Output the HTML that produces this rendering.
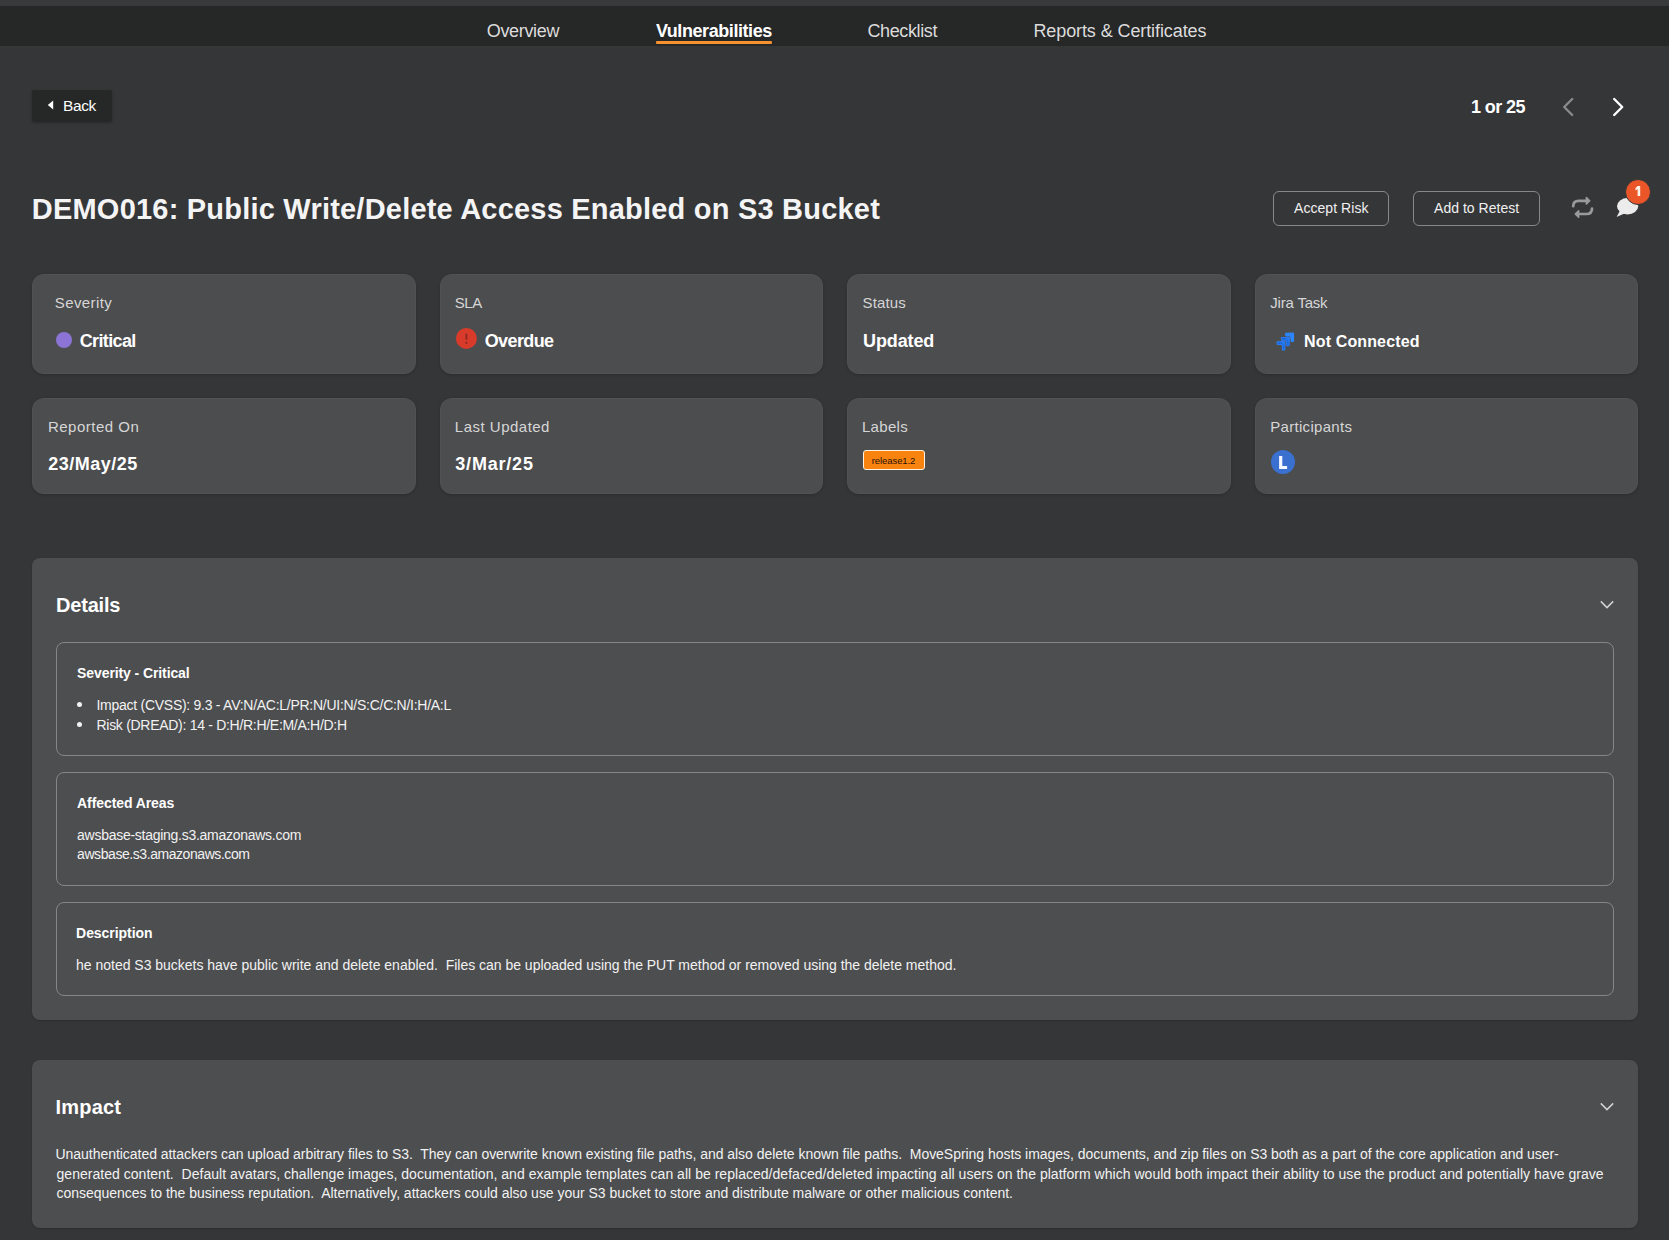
<!DOCTYPE html>
<html><head><meta charset="utf-8"><style>
html,body{margin:0;padding:0;}
body{width:1669px;height:1240px;overflow:hidden;background:#353638;position:relative;font-family:"Liberation Sans",sans-serif;}
.t{position:absolute;white-space:nowrap;line-height:1;font-family:"Liberation Sans",sans-serif;}
.abs{position:absolute;}
#stripe{left:0;top:0;width:1669px;height:6px;background:#393a3c;}
#nav{left:0;top:6px;width:1669px;height:40px;background:#262727;}
#uline{left:656px;top:41px;width:116px;height:3px;background:#f5922f;border-radius:1px;}
#backbtn{left:32px;top:90px;width:80px;height:32px;background:#262727;border-radius:2px;box-shadow:0 1px 3px rgba(0,0,0,0.25);}
.card{position:absolute;background:#4c4d4f;border-radius:12px;box-shadow:inset 0 0 0 1px rgba(255,255,255,0.03),0 1px 3px rgba(0,0,0,0.18);}
.panel{position:absolute;background:#4d4e50;border-radius:8px;box-shadow:0 1px 2px rgba(0,0,0,0.2);}
.box{position:absolute;border:1.5px solid #868686;border-radius:8px;box-sizing:border-box;}
.obtn{position:absolute;border:1.5px solid #888;border-radius:6px;box-sizing:border-box;}

</style></head><body>
<div id="stripe" class="abs"></div>
<div id="nav" class="abs"></div>
<div id="uline" class="abs"></div>
<div id="backbtn" class="abs"></div>
<svg class="abs" style="left:46px;top:99px" width="9" height="12" viewBox="0 0 9 12"><path d="M7.2 1.4 L1.8 6 L7.2 10.4 Z" fill="#fff"/></svg>
<!-- pagination chevrons -->
<svg class="abs" style="left:1560px;top:95px" width="16" height="24" viewBox="0 0 16 24"><path d="M12.2 4 L4.2 12 L12.2 20" fill="none" stroke="#8a8a8a" stroke-width="2.4" stroke-linecap="round" stroke-linejoin="round"/></svg>
<svg class="abs" style="left:1610px;top:95px" width="16" height="24" viewBox="0 0 16 24"><path d="M4.2 4 L12.2 12 L4.2 20" fill="none" stroke="#ffffff" stroke-width="2.4" stroke-linecap="round" stroke-linejoin="round"/></svg>
<!-- outline buttons -->
<div class="obtn" style="left:1273px;top:191px;width:116px;height:35px"></div>
<div class="obtn" style="left:1413px;top:191px;width:127px;height:35px"></div>
<!-- retest icon -->
<svg class="abs" style="left:1568px;top:193px" width="30" height="28" viewBox="0 0 30 28">
<path d="M5.2 13.2 C5.2 10 7 7.9 10.5 7.9 L18.5 7.9" fill="none" stroke="#9a9a9a" stroke-width="2.7" stroke-linecap="round"/>
<path d="M18.4 4.6 L21.7 7.8 L18.4 11 Z" fill="#9a9a9a" stroke="#9a9a9a" stroke-width="1.6" stroke-linejoin="round"/>
<path d="M24 15.5 C24 18.8 22.2 21 18.5 21 L10.5 21" fill="none" stroke="#9a9a9a" stroke-width="2.7" stroke-linecap="round"/>
<path d="M10.6 17.8 L7.3 21 L10.6 24.2 Z" fill="#9a9a9a" stroke="#9a9a9a" stroke-width="1.6" stroke-linejoin="round"/>
</svg>
<!-- chat icon -->
<svg class="abs" style="left:1614px;top:196px" width="28" height="24" viewBox="0 0 28 24">
<ellipse cx="13.6" cy="10.2" rx="10.6" ry="8.2" fill="#ececec"/>
<path d="M6 14.5 L2.6 21 L11 17.2 Z" fill="#ececec"/>
</svg>
<div class="abs" style="left:1624.5px;top:178.5px;width:24px;height:24px;border-radius:50%;background:#ea5628;border:1.5px solid #353638;"></div>
<svg class="abs" style="left:1630px;top:180px" width="16" height="20" viewBox="1630 180 16 20"><path d="M1637.6 186 L1640.2 186 L1640.2 196 L1637.6 196 L1637.6 189 L1635.5 190.4 L1635.5 188.1 Z" fill="#fff4ea"/></svg>
<!-- cards -->
<div class="card" style="left:32px;top:274px;width:383.5px;height:100px"></div>
<div class="card" style="left:439.5px;top:274px;width:383.5px;height:100px"></div>
<div class="card" style="left:847px;top:274px;width:383.5px;height:100px"></div>
<div class="card" style="left:1254.5px;top:274px;width:383.5px;height:100px"></div>
<div class="card" style="left:32px;top:398px;width:383.5px;height:96px"></div>
<div class="card" style="left:439.5px;top:398px;width:383.5px;height:96px"></div>
<div class="card" style="left:847px;top:398px;width:383.5px;height:96px"></div>
<div class="card" style="left:1254.5px;top:398px;width:383.5px;height:96px"></div>
<!-- severity dot -->
<div class="abs" style="left:56px;top:332px;width:16px;height:16px;border-radius:50%;background:#8b74d6"></div>
<!-- SLA icon -->
<svg class="abs" style="left:455px;top:327px" width="23" height="23" viewBox="0 0 23 23">
<circle cx="11.4" cy="11.4" r="10.5" fill="#d93b2a"/>
<rect x="10.45" y="6.6" width="1.9" height="6.2" rx="0.9" fill="#8a2a22"/>
<circle cx="11.4" cy="15.8" r="1.15" fill="#8a2a22"/>
</svg>
<!-- jira icon -->
<svg class="abs" style="left:1268px;top:325px" width="35" height="32" viewBox="0 0 35 32">
<defs><linearGradient id="jg" x1="0" y1="1" x2="1" y2="0"><stop offset="0" stop-color="#2b86ff"/><stop offset="0.55" stop-color="#1a62d6"/><stop offset="1" stop-color="#2b86ff"/></linearGradient></defs>
<path transform="translate(-8.6 8.6)" d="M17.6 8.2 L25.6 8.0 L25.5 16.4 L23.2 16.6 L22.6 10.9 L17.8 11.0 Z" fill="url(#jg)" stroke="#2a7ef5" stroke-width="1" stroke-linejoin="round"/>
<path transform="translate(-4.3 4.3)" d="M17.6 8.2 L25.6 8.0 L25.5 16.4 L23.2 16.6 L22.6 10.9 L17.8 11.0 Z" fill="url(#jg)" stroke="#2a7ef5" stroke-width="1" stroke-linejoin="round"/>
<path d="M17.6 8.2 L25.6 8.0 L25.5 16.4 L23.2 16.6 L22.6 10.9 L17.8 11.0 Z" fill="#2b86ff" stroke="#2b86ff" stroke-width="1" stroke-linejoin="round"/>
</svg>
<!-- label tag -->
<div class="abs" style="left:863px;top:450px;width:62px;height:20px;box-sizing:border-box;border:1.5px solid #fff3e0;border-radius:3px;background:#f8840f"></div>
<!-- avatar -->
<div class="abs" style="left:1271px;top:450px;width:24px;height:24px;border-radius:50%;background:#3a70d0"></div>
<svg class="abs" style="left:1270px;top:447px" width="30" height="30" viewBox="1270 447 30 30"><path d="M1279.1 456 H1282.3 V466.1 H1287.1 V468.9 H1279.1 Z" fill="#f4f8ff"/></svg>
<!-- details panel -->
<div class="panel" style="left:32px;top:558px;width:1606px;height:462px"></div>
<svg class="abs" style="left:1598px;top:598px" width="18" height="14" viewBox="0 0 18 14"><path d="M2.8 3.4 L9 9.6 L15.2 3.4" fill="none" stroke="#d2d2d2" stroke-width="1.5"/></svg>
<div class="box" style="left:56px;top:642px;width:1558px;height:114px"></div>
<div class="abs" style="left:77px;top:702px;width:5px;height:5px;border-radius:50%;background:#f2f2f2"></div>
<div class="abs" style="left:77px;top:722px;width:5px;height:5px;border-radius:50%;background:#f2f2f2"></div>
<div class="box" style="left:56px;top:772px;width:1558px;height:114px"></div>
<div class="box" style="left:56px;top:902px;width:1558px;height:94px"></div>
<!-- impact panel -->
<div class="panel" style="left:32px;top:1060px;width:1606px;height:168px"></div>
<svg class="abs" style="left:1598px;top:1100px" width="18" height="14" viewBox="0 0 18 14"><path d="M2.8 3.4 L9 9.6 L15.2 3.4" fill="none" stroke="#d2d2d2" stroke-width="1.5"/></svg>

<div id="nav1" class="t" style="left:486.80px;top:21.76px;font-size:18px;font-weight:400;color:#dcdcdc;letter-spacing:-0.343px">Overview</div>
<div id="nav2" class="t" style="left:655.90px;top:21.76px;font-size:18px;font-weight:700;color:#ffffff;letter-spacing:-0.429px">Vulnerabilities</div>
<div id="nav3" class="t" style="left:867.40px;top:21.76px;font-size:18px;font-weight:400;color:#dcdcdc;letter-spacing:-0.375px">Checklist</div>
<div id="nav4" class="t" style="left:1033.40px;top:21.76px;font-size:18px;font-weight:400;color:#dcdcdc;letter-spacing:-0.095px">Reports &amp; Certificates</div>
<div id="back" class="t" style="left:63.00px;top:98.18px;font-size:15.5px;font-weight:400;color:#ffffff;letter-spacing:-0.400px">Back</div>
<div id="pg" class="t" style="left:1471.00px;top:97.66px;font-size:18px;font-weight:700;color:#ffffff;letter-spacing:-0.603px">1 or 25</div>
<div id="title" class="t" style="left:31.80px;top:195.35px;font-size:29px;font-weight:700;color:#f4f4f4;letter-spacing:0.211px">DEMO016: Public Write/Delete Access Enabled on S3 Bucket</div>
<div id="btn1" class="t" style="left:1294.00px;top:200.85px;font-size:14px;font-weight:400;color:#f0f0f0;letter-spacing:0.060px">Accept Risk</div>
<div id="btn2" class="t" style="left:1434.10px;top:200.85px;font-size:14px;font-weight:400;color:#f0f0f0;letter-spacing:0.017px">Add to Retest</div>
<div id="l1" class="t" style="left:54.80px;top:295.10px;font-size:15px;font-weight:400;color:#d6d6d6;letter-spacing:0.389px">Severity</div>
<div id="l2" class="t" style="left:454.84px;top:295.30px;font-size:15px;font-weight:400;color:#d6d6d6;letter-spacing:-0.470px">SLA</div>
<div id="l3" class="t" style="left:862.60px;top:295.10px;font-size:15px;font-weight:400;color:#d6d6d6;letter-spacing:0.120px">Status</div>
<div id="l4" class="t" style="left:1270.32px;top:295.10px;font-size:15px;font-weight:400;color:#d6d6d6;letter-spacing:-0.200px">Jira Task</div>
<div id="l5" class="t" style="left:47.90px;top:419.30px;font-size:15px;font-weight:400;color:#d6d6d6;letter-spacing:0.500px">Reported On</div>
<div id="l6" class="t" style="left:454.84px;top:419.30px;font-size:15px;font-weight:400;color:#d6d6d6;letter-spacing:0.491px">Last Updated</div>
<div id="l7" class="t" style="left:861.92px;top:419.30px;font-size:15px;font-weight:400;color:#d6d6d6;letter-spacing:0.320px">Labels</div>
<div id="l8" class="t" style="left:1270.20px;top:419.30px;font-size:15px;font-weight:400;color:#d6d6d6;letter-spacing:0.309px">Participants</div>
<div id="v1" class="t" style="left:79.68px;top:331.56px;font-size:18px;font-weight:700;color:#ffffff;letter-spacing:-0.629px">Critical</div>
<div id="v2" class="t" style="left:484.70px;top:331.66px;font-size:18px;font-weight:700;color:#ffffff;letter-spacing:-0.600px">Overdue</div>
<div id="v3" class="t" style="left:863.10px;top:331.66px;font-size:18px;font-weight:700;color:#ffffff;letter-spacing:-0.133px">Updated</div>
<div id="v4" class="t" style="left:1304.08px;top:333.76px;font-size:16px;font-weight:700;color:#ffffff;letter-spacing:0.133px">Not Connected</div>
<div id="v5" class="t" style="left:48.32px;top:455.36px;font-size:18px;font-weight:700;color:#ffffff;letter-spacing:0.500px">23/May/25</div>
<div id="v6" class="t" style="left:455.30px;top:455.36px;font-size:18px;font-weight:700;color:#ffffff;letter-spacing:0.800px">3/Mar/25</div>
<div id="h1" class="t" style="left:56.00px;top:594.97px;font-size:20px;font-weight:700;color:#ffffff;letter-spacing:-0.200px">Details</div>
<div id="d1" class="t" style="left:77.10px;top:665.85px;font-size:14px;font-weight:700;color:#ffffff;letter-spacing:-0.100px">Severity - Critical</div>
<div id="d2" class="t" style="left:96.50px;top:697.95px;font-size:14px;font-weight:400;color:#f2f2f2;letter-spacing:-0.269px">Impact (CVSS): 9.3 - AV:N/AC:L/PR:N/UI:N/S:C/C:N/I:H/A:L</div>
<div id="d3" class="t" style="left:96.50px;top:717.55px;font-size:14px;font-weight:400;color:#f2f2f2;letter-spacing:-0.292px">Risk (DREAD): 14 - D:H/R:H/E:M/A:H/D:H</div>
<div id="d4" class="t" style="left:77.10px;top:796.05px;font-size:14px;font-weight:700;color:#ffffff;letter-spacing:-0.092px">Affected Areas</div>
<div id="d5" class="t" style="left:77.10px;top:827.55px;font-size:14px;font-weight:400;color:#f2f2f2;letter-spacing:-0.271px">awsbase-staging.s3.amazonaws.com</div>
<div id="d6" class="t" style="left:77.10px;top:847.35px;font-size:14px;font-weight:400;color:#f2f2f2;letter-spacing:-0.435px">awsbase.s3.amazonaws.com</div>
<div id="d7" class="t" style="left:76.10px;top:926.05px;font-size:14px;font-weight:700;color:#ffffff;letter-spacing:-0.060px">Description</div>
<div id="d8" class="t" style="left:76.10px;top:957.55px;font-size:14px;font-weight:400;color:#f2f2f2;letter-spacing:-0.015px">he noted S3 buckets have public write and delete enabled.&nbsp; Files can be uploaded using the PUT method or removed using the delete method.</div>
<div id="tag" class="t" style="left:871.80px;top:456.36px;font-size:9.5px;font-weight:400;color:#2a1208;letter-spacing:-0.089px">release1.2</div>
<div id="h2" class="t" style="left:55.50px;top:1097.27px;font-size:20px;font-weight:700;color:#ffffff;letter-spacing:0.200px">Impact</div>
<div id="i1" class="t" style="left:55.50px;top:1147.15px;font-size:14px;font-weight:400;color:#f2f2f2;letter-spacing:-0.038px">Unauthenticated attackers can upload arbitrary files to S3.&nbsp; They can overwrite known existing file paths, and also delete known file paths.&nbsp; MoveSpring hosts images, documents, and zip files on S3 both as a part of the core application and user-</div>
<div id="i2" class="t" style="left:56.50px;top:1166.85px;font-size:14px;font-weight:400;color:#f2f2f2;letter-spacing:0.028px">generated content.&nbsp; Default avatars, challenge images, documentation, and example templates can all be replaced/defaced/deleted impacting all users on the platform which would both impact their ability to use the product and potentially have grave</div>
<div id="i3" class="t" style="left:56.50px;top:1186.15px;font-size:14px;font-weight:400;color:#f2f2f2;letter-spacing:-0.018px">consequences to the business reputation.&nbsp; Alternatively, attackers could also use your S3 bucket to store and distribute malware or other malicious content.</div>
</body></html>
